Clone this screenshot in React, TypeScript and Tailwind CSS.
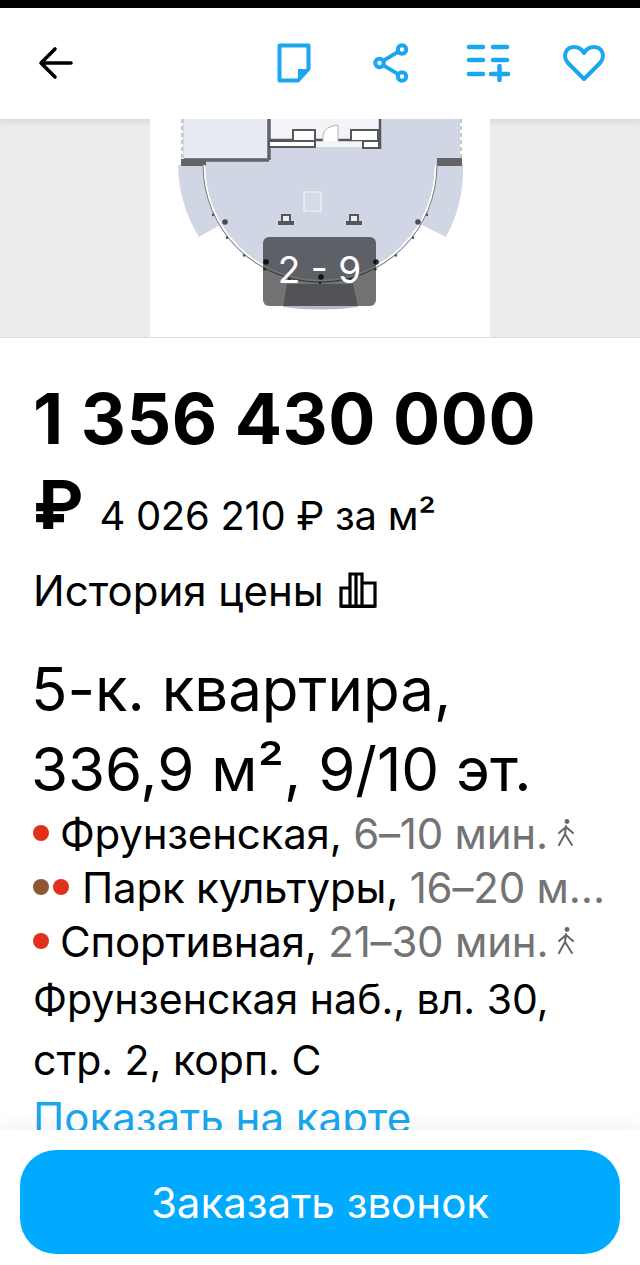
const BLUE = '#1aa7ee'

function BackIcon() {
  return (
    <svg width="36" height="34" viewBox="0 0 36 34" fill="none" stroke="#000" strokeWidth="3.6" strokeLinecap="round" strokeLinejoin="round">
      <path d="M33 17H4M17 3 3 17l14 14" />
    </svg>
  )
}

function NoteIcon() {
  return (
    <svg width="34" height="40" viewBox="0 0 34 40" fill="none">
      <path d="M2.500 2.500h29V26L21 37.500H2.500z" stroke={BLUE} strokeWidth="4" strokeLinejoin="round" />
      <path d="M21 26h11L21 38z" fill={BLUE} />
    </svg>
  )
}

function ShareIcon() {
  return (
    <svg width="36" height="40" viewBox="0 0 36 40" fill="none" stroke={BLUE} strokeWidth="4">
      <circle cx="29" cy="6.500" r="4.200" />
      <circle cx="6.500" cy="20" r="4.200" />
      <circle cx="29" cy="33.500" r="4.200" />
      <path d="M25.500 8.600 10 17.900M10 22.100l15.500 9.300" />
    </svg>
  )
}

function CompareIcon() {
  return (
    <svg width="44" height="38" viewBox="0 0 44 38" fill="none" stroke={BLUE} strokeWidth="4.500" strokeLinecap="round">
      <path d="M3 3h14M27 3h14M3 16h14M27 16h14M3 30h14M25 30h17M33.500 22v14" />
    </svg>
  )
}

function HeartIcon() {
  return (
    <svg width="42" height="38" viewBox="0 0 42 38" fill="none" stroke={BLUE} strokeWidth="4" strokeLinejoin="round">
      <path d="M21 35 5 19C-1 12 3 3 11 3c4.500 0 8 2.500 10 6 2-3.500 5.500-6 10-6 8 0 12 9 6 16z" />
    </svg>
  )
}

function Walker() {
  return (
    <svg width="20" height="30" viewBox="0 0 20 30" fill="none" stroke="#666" strokeWidth="2" strokeLinecap="round" strokeLinejoin="round" className="ml-[8px] shrink-0">
      <circle cx="11" cy="3.500" r="2.400" fill="#666" stroke="none" />
      <path d="M10 8 9 16l-6 11M9 16l7 11M10 9l-7 6M10 9l7 6" />
    </svg>
  )
}

function ChartIcon() {
  return (
    <svg width="38" height="36" viewBox="0 0 38 36" fill="none" stroke="#000" strokeWidth="3.200" className="ml-[15px]">
      <path d="M1.500 34.500h35M2 16h9v18H2zM11 2h12v32H11zM23 11h13v23H23zM17 2v32" />
    </svg>
  )
}

// поэтажный план, координаты как на экране
function FloorPlan() {
  const ticks = [25, 38, 50, 62, 75, 90, 105, 118, 130, 142, 155]
  return (
    <svg viewBox="150 119 340 218" className="h-full w-[340px] blur-[0.4px]">
      <rect x="150" y="119" width="340" height="218" fill="#fff" />
      <path d="M178 165A142 142 0 0 0 199 237L220 225 203 165z" fill="#d0d6e4" />
      <path d="M463 165A142 142 0 0 1 446 237L422 225 437 165z" fill="#d0d6e4" />
      <path d="M183 119h277v46h-22a118 118 0 0 1-236 0h-19z" fill="#d0d6e4" />
      <path d="M184 119h84v39h-84z" fill="#e8ebf3" />
      <path d="M270 119h110v28h-110z" fill="#f3f4f8" />
      <path d="M269 119v41M184 160h85" stroke="#626468" strokeWidth="3.500" fill="none" />
      <rect x="181" y="159" width="25" height="7" fill="#626468" />
      <rect x="437" y="158" width="25" height="8" fill="#626468" />
      <path d="M182 119v40M461 119v40" stroke="#8a8d94" strokeWidth="1" strokeDasharray="4 3" fill="none" />
      <path d="M270 140h53M338 140h43M380 119v30" stroke="#55575b" strokeWidth="2.500" fill="none" />
      <path d="M293 140v-10h22v10M351 140v-10h27v10M269 141h46v6h-46zM363 141h16v7h-16z" stroke="#55575b" strokeWidth="2" fill="#fff" />
      <path d="M323 141v-6q2-9 15-10v16" stroke="#aeb1b8" strokeWidth="1" fill="#fff" />
      <rect x="304" y="192" width="17" height="19" fill="#d6dbe8" stroke="#f6f7fa" strokeWidth="1" />
      <path d="M278 221h16v4h-16zM346 221h16v4h-16z" fill="#55575b" />
      <path d="M282 221v-6h8v6M350 221v-6h8v6" fill="#eceef4" stroke="#55575b" strokeWidth="2" />
      <path d="M204 165a116 116 0 0 0 232 0" fill="none" stroke="#fff" strokeWidth="2.500" />
      <path d="M203 165a117 117 0 0 0 234 0" fill="none" stroke="#74777f" strokeWidth="1" />
      {ticks.map((a) => {
        const r = (a * Math.PI) / 180
        return <circle key={a} cx={320 + 118 * Math.cos(r)} cy={165 + 118 * Math.sin(r)} r="1.300" fill="#55575b" />
      })}
      <circle cx="225" cy="222" r="2.800" fill="#4b4d55" />
      <circle cx="418" cy="222" r="2.800" fill="#4b4d55" />
      <circle cx="266" cy="262" r="2.800" fill="#2a2b30" />
      <circle cx="376" cy="262" r="2.800" fill="#2a2b30" />
      <circle cx="321" cy="277" r="2.800" fill="#2a2b30" />
      <path d="M287 284h66l5 23q-38 5-75 0z" fill="#b5b8c6" />
    </svg>
  )
}

function Metro({ dots, name, time, walk }: { dots: string[]; name: string; time: string; walk?: boolean }) {
  return (
    <div className="flex h-[54px] items-center">
      <div className={`flex shrink-0 gap-[4px] ${dots.length > 1 ? 'mr-[13px]' : 'mr-[11px]'}`}>
        {dots.map((c, i) => (
          <span key={i} className={`h-[16px] w-[16px] rounded-full ${c}`} />
        ))}
      </div>
      <div className="whitespace-nowrap tracking-[-0.2px] text-[#737373]">
        <span className="text-black">{name}, </span>
        {time}
      </div>
      {walk && <Walker />}
    </div>
  )
}

export default function App() {
  return (
    <div className="flex h-[1265px] w-[640px] flex-col overflow-hidden bg-white font-['Inter','Noto_Sans',sans-serif] text-black">
      <div className="h-[8px] shrink-0 bg-black" />
      <header className="relative z-10 flex h-[111px] shrink-0 items-center bg-white pb-[2px] pl-[38px] pr-[35px]">
        <BackIcon />
        <div className="ml-auto flex items-center">
          <NoteIcon />
          <div className="ml-[62px]">
            <ShareIcon />
          </div>
          <div className="ml-[57px]">
            <CompareIcon />
          </div>
          <div className="ml-[53px]">
            <HeartIcon />
          </div>
        </div>
      </header>
      <div className="relative flex h-[219px] shrink-0 justify-center border-b border-[#dcdcdc] bg-[#ececec] shadow-[inset_0_8px_8px_-6px_rgba(0,0,0,0.1)]">
        <FloorPlan />
        <div className="absolute left-[263px] top-[118px] flex h-[69px] w-[113px] items-center justify-center rounded-[6px] bg-black/55 pb-[4px] text-[37px] text-white">
          2 - 9
        </div>
      </div>
      <main className="min-h-0 flex-1 overflow-hidden pl-[33px] pr-[40px]">
        <div className="mt-[40px] whitespace-nowrap text-[70px] font-bold leading-[82px] tracking-[0.5px]">1 356 430 000</div>
        <div className="mt-[14px] flex h-[60px] items-center">
          <span className="text-[68px] font-bold leading-[60px]">₽</span>
          <span className="ml-[16px] mt-[24px] whitespace-nowrap text-[40px] tracking-[-0.3px]">4 026 210 ₽ за м²</span>
        </div>
        <div className="mt-[33px] flex h-[46px] items-center text-[42px]">
          История цены
          <ChartIcon />
        </div>
        <h1 className="-ml-[2px] mt-[36px] whitespace-nowrap text-[60px] font-normal leading-[80px]">
          5-к. квартира,
          <br />
          336,9 м², 9/10 эт.
        </h1>
        <div className="-mt-[3px] text-[42px]">
          <Metro dots={['bg-[#e2301f]']} name="Фрунзенская" time="6–10 мин." walk />
          <Metro dots={['bg-[#8f5633]', 'bg-[#e2301f]']} name="Парк культуры" time="16–20 м…" />
          <Metro dots={['bg-[#e2301f]']} name="Спортивная" time="21–30 мин." walk />
        </div>
        <div className="mt-[1px] whitespace-nowrap text-[41px] leading-[61px]">
          Фрунзенская наб., вл. 30,
          <br />
          стр. 2, корп. С
        </div>
        <div className="whitespace-nowrap text-[42px] leading-[54px] text-[#1aa7ee]">Показать на карте</div>
      </main>
      <footer className="relative h-[135px] shrink-0 bg-white px-[20px] pt-[20px] shadow-[0_-8px_14px_rgba(0,0,0,0.04)]">
        <button className="flex h-[104px] w-full items-center justify-center rounded-[36px] bg-[#00aaff] text-[42px] text-white">
          Заказать звонок
        </button>
      </footer>
    </div>
  )
}
